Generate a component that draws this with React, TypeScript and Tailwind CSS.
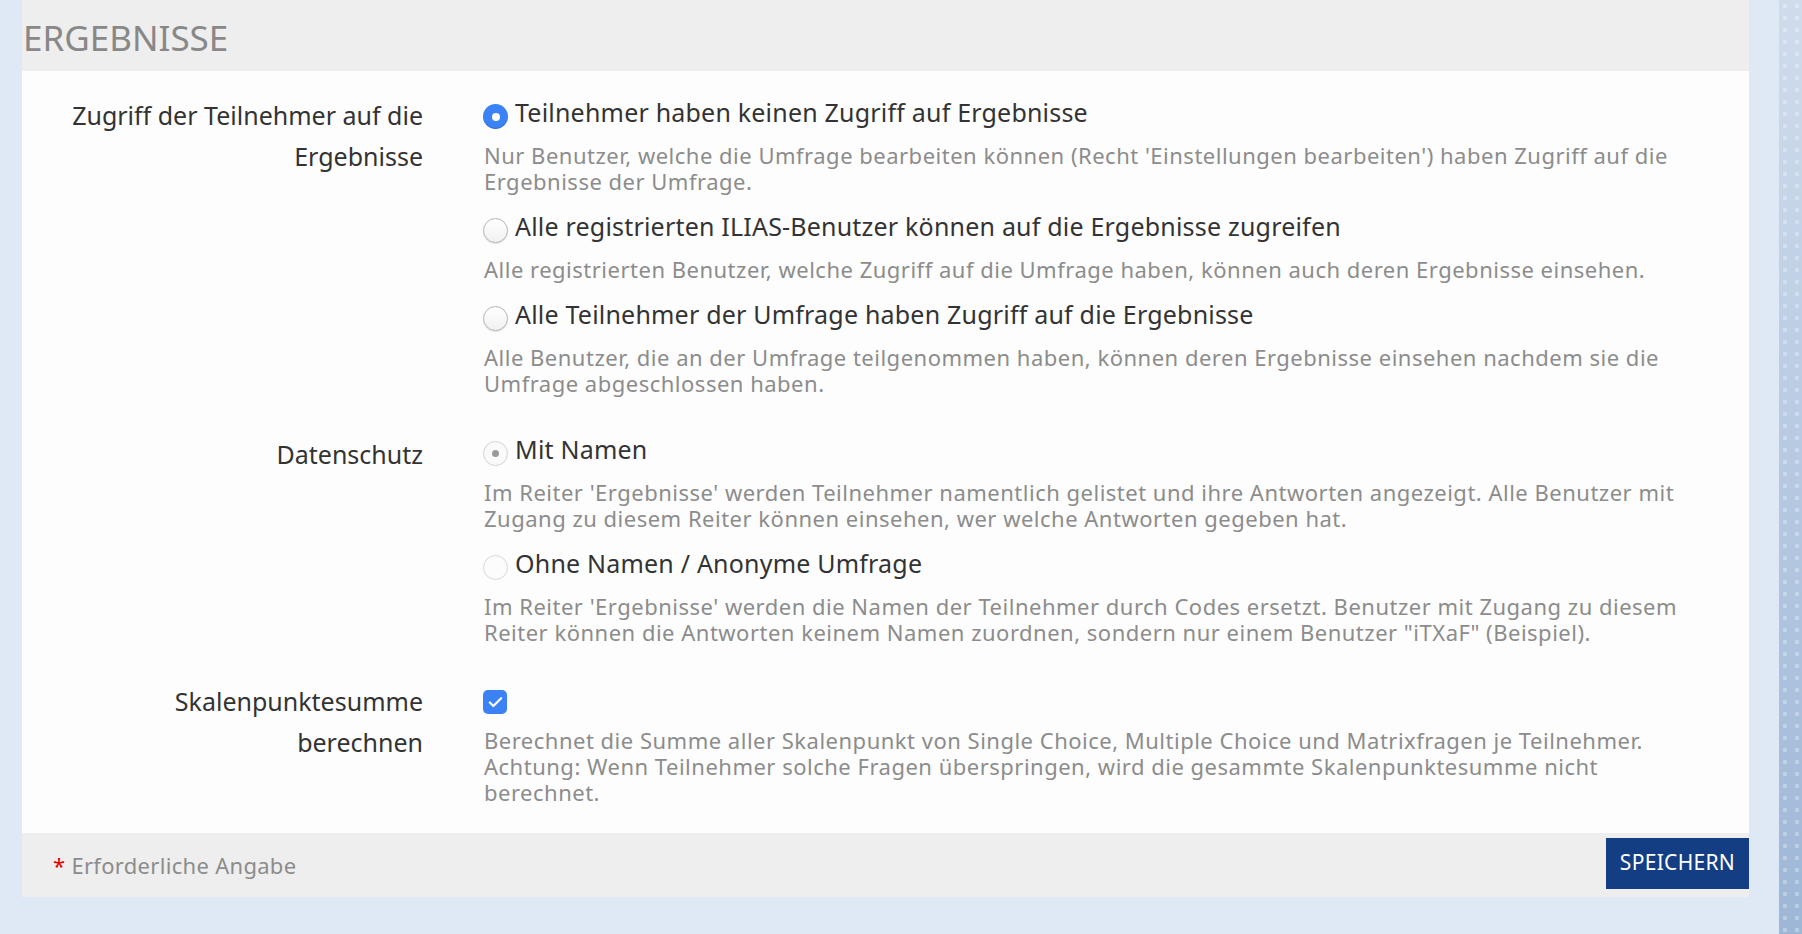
import { Check } from "lucide-react";

type Opt = { label: string; desc: string[]; state: "on" | "off" | "disabledOn" | "disabledOff" };

const accessOptions: Opt[] = [
    {
        label: "Teilnehmer haben keinen Zugriff auf Ergebnisse",
        desc: [
            "Nur Benutzer, welche die Umfrage bearbeiten können (Recht 'Einstellungen bearbeiten') haben Zugriff auf die",
            "Ergebnisse der Umfrage.",
        ],
        state: "on",
    },
    {
        label: "Alle registrierten ILIAS-Benutzer können auf die Ergebnisse zugreifen",
        desc: ["Alle registrierten Benutzer, welche Zugriff auf die Umfrage haben, können auch deren Ergebnisse einsehen."],
        state: "off",
    },
    {
        label: "Alle Teilnehmer der Umfrage haben Zugriff auf die Ergebnisse",
        desc: [
            "Alle Benutzer, die an der Umfrage teilgenommen haben, können deren Ergebnisse einsehen nachdem sie die",
            "Umfrage abgeschlossen haben.",
        ],
        state: "off",
    },
];

const privacyOptions: Opt[] = [
    {
        label: "Mit Namen",
        desc: [
            "Im Reiter 'Ergebnisse' werden Teilnehmer namentlich gelistet und ihre Antworten angezeigt. Alle Benutzer mit",
            "Zugang zu diesem Reiter können einsehen, wer welche Antworten gegeben hat.",
        ],
        state: "disabledOn",
    },
    {
        label: "Ohne Namen / Anonyme Umfrage",
        desc: [
            "Im Reiter 'Ergebnisse' werden die Namen der Teilnehmer durch Codes ersetzt. Benutzer mit Zugang zu diesem",
            "Reiter können die Antworten keinem Namen zuordnen, sondern nur einem Benutzer \"iTXaF\" (Beispiel).",
        ],
        state: "disabledOff",
    },
];

function Radio({ state }: { state: Opt["state"] }) {
    if (state === "on") {
        return (
            <span className="mt-[9px] flex h-[25px] w-[25px] shrink-0 items-center justify-center rounded-full bg-[#3a82f6] shadow-[inset_0_-1px_1px_rgba(0,0,0,0.15)]">
                <span className="h-[8px] w-[8px] rounded-full bg-white" />
            </span>
        );
    }
    if (state === "disabledOn") {
        return (
            <span className="mt-[9px] flex h-[25px] w-[25px] shrink-0 items-center justify-center rounded-full border border-[#d3d3d3] bg-[#fafafa]">
                <span className="h-[7px] w-[7px] rounded-full bg-[#9a9a9a]" />
            </span>
        );
    }
    if (state === "disabledOff") {
        return <span className="mt-[9px] h-[25px] w-[25px] shrink-0 rounded-full border border-[#d8d8d8] bg-[#fcfcfc]" />;
    }
    return (
        <span className="mt-[9px] h-[25px] w-[25px] shrink-0 rounded-full border border-[#b5b5b5] bg-gradient-to-b from-white to-[#f1f1f1] shadow-[0_1px_1px_rgba(0,0,0,0.12)]" />
    );
}

function Desc({ lines }: { lines: string[] }) {
    return (
        <p className="mt-[13px] whitespace-nowrap pl-px text-[22px] leading-[26px] tracking-[0.5px] text-[#8c8c8c]">
            {lines.map((l, i) => (
                <span key={i} className="block">
                    {l}
                </span>
            ))}
        </p>
    );
}

function Options({ items }: { items: Opt[] }) {
    return (
        <div className="flex flex-col gap-[15px]">
            {items.map((o) => (
                <div key={o.label}>
                    <div className="flex items-start gap-[7px]">
                        <Radio state={o.state} />
                        <span className="text-[25px] leading-[34px] tracking-[0.2px] text-[#333]">{o.label}</span>
                    </div>
                    <Desc lines={o.desc} />
                </div>
            ))}
        </div>
    );
}

function Label({ lines, className = "" }: { lines: string[]; className?: string }) {
    return (
        <div className={`w-[401px] shrink-0 text-right text-[25px] leading-[41px] text-[#333] ${className}`}>
            {lines.map((l) => (
                <div key={l}>{l}</div>
            ))}
        </div>
    );
}

export default function App() {
    return (
        <div
            className="flex h-[934px] w-[1802px] overflow-hidden bg-[#dee9f5]"
            style={{ fontFamily: "'Noto Sans', Roboto, sans-serif" }}
        >
            <div className="ml-[22px] w-[1727px] self-start">
                <div className="flex h-[71px] items-center bg-[#eeeeee] pl-px pt-[3px]">
                    <h2 className="text-[35px] leading-none text-[#888]">ERGEBNISSE</h2>
                </div>

                <div className="flex flex-col gap-[36px] bg-[#fdfdfd] pb-[28px] pt-[24px]">
                    <div className="flex gap-[60px]">
                        <Label lines={["Zugriff der Teilnehmer auf die", "Ergebnisse"]} />
                        <Options items={accessOptions} />
                    </div>
                    <div className="flex gap-[60px]">
                        <Label lines={["Datenschutz"]} className="mt-[2px]" />
                        <Options items={privacyOptions} />
                    </div>
                    <div className="mt-[3px] flex gap-[60px]">
                        <Label lines={["Skalenpunktesumme", "berechnen"]} className="-mt-[3px]" />
                        <div>
                            <div className="flex h-[34px] items-center">
                                <span className="mt-[2px] flex h-[24px] w-[24px] items-center justify-center rounded-[5px] bg-[#3a82f6]">
                                    <Check size={17} strokeWidth={3.2} className="text-white" />
                                </span>
                            </div>
                            <p className="mt-[9px] whitespace-nowrap pl-px text-[22px] leading-[26px] tracking-[0.5px] text-[#8c8c8c]">
                                Berechnet die Summe aller Skalenpunkt von Single Choice, Multiple Choice und Matrixfragen je Teilnehmer.
                                <br />
                                Achtung: Wenn Teilnehmer solche Fragen überspringen, wird die gesammte Skalenpunktesumme nicht
                                <br />
                                berechnet.
                            </p>
                        </div>
                    </div>
                </div>

                <div className="flex h-[64px] items-center justify-between bg-[#eeeeee]">
                    <span className="ml-[31px] text-[22px] tracking-[0.3px] text-[#8c8c8c]">
                        <span className="mr-[6px] text-[#e00000]">*</span>
                        Erforderliche Angabe
                    </span>
                    <button className="mt-[-4px] h-[51px] w-[143px] bg-[#133e83] text-[21px] tracking-[0.3px] text-white">SPEICHERN</button>
                </div>
            </div>

            <div className="ml-[30px] h-full w-[23px] bg-gradient-to-b from-[#d0dcec] to-[#9eb7d7]">
                <div className="h-full w-full bg-[radial-gradient(circle,rgba(255,255,255,0.3)_2px,transparent_2.5px)] bg-[length:12px_12px]" />
            </div>
        </div>
    );
}
